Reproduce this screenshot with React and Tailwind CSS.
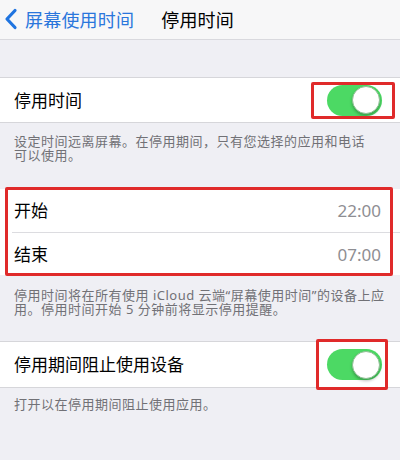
import React from "react";

function Toggle() {
  return (
    <div className="relative w-[55px] h-[31px] rounded-full bg-[#4cd964]">
      <div className="absolute right-[2px] top-[1.5px] w-[28px] h-[28px] rounded-full bg-white border border-[#8fbf94] shadow-[0_2px_3px_rgba(0,0,0,0.25)]" />
    </div>
  );
}

export default function App() {
  const font = { fontFamily: '"Noto Sans", "Noto Sans CJK SC", sans-serif' };
  return (
    <div className="w-[400px] h-[460px] bg-[#efeff4] overflow-hidden" style={font}>
      {/* nav bar */}
      <div className="h-[40px] bg-[#f7f7f8] border-b border-[#d9d9de] flex items-center">
        <svg width="14" height="22" viewBox="0 0 14 22" className="ml-[4px] mt-[-2px]">
          <path d="M11 2.5 L3 11 L11 19.5" fill="none" stroke="#1f74e0" strokeWidth="3.2" strokeLinecap="round" strokeLinejoin="round" />
        </svg>
        <span className="ml-[7px] text-[18px] leading-none text-[#2a76dc] tracking-[0.2px]">屏幕使用时间</span>
        <span className="ml-[27px] text-[18px] leading-none text-black tracking-[0.2px]">停用时间</span>
      </div>

      <div className="h-[37px]" />

      {/* row 1 */}
      <div className="relative h-[46px] bg-white border-t border-b border-[#d6d6da] flex items-center justify-between pl-[14px] pr-[18px]">
        <span className="text-[17px] text-black leading-none">停用时间</span>
        <Toggle />
        <div className="absolute left-[311px] top-[4px] w-[84px] h-[37px] border-[3px] border-[#e02a2a] rounded-[2px]" />
      </div>

      <div className="h-[66px] pt-[11px] px-[14px] text-[13px] tracking-[0.5px] leading-[14px] text-[#717176]">
        <p>设定时间远离屏幕。在停用期间，只有您选择的应用和电话</p>
        <p>可以使用。</p>
      </div>

      {/* section 2 */}
      <div className="relative bg-white">
        <div className="h-[43px] flex items-center justify-between pl-[14px] pr-[19px]">
          <span className="text-[17px] text-black leading-none">开始</span>
          <span className="text-[17px] text-[#8e8e93] leading-none">22:00</span>
        </div>
        <div className="ml-[12px] h-px bg-[#dcdce0]" />
        <div className="h-[42px] flex items-center justify-between pl-[14px] pr-[19px]">
          <span className="text-[17px] text-black leading-none">结束</span>
          <span className="text-[17px] text-[#8e8e93] leading-none">07:00</span>
        </div>
        <div className="absolute left-[5px] right-[7px] top-[-2px] bottom-[-1px] border-[3px] border-[#e02a2a] rounded-[2px]" />
      </div>

      <div className="h-[66px] pt-[13px] px-[14px] text-[13px] tracking-[0.5px] leading-[14px] text-[#717176]">
        <p>停用时间将在所有使用 iCloud 云端“屏幕使用时间”的设备上应</p>
        <p>用。停用时间开始 5 分钟前将显示停用提醒。</p>
      </div>

      {/* row 3 */}
      <div className="relative h-[47px] bg-white border-t border-b border-[#d6d6da] flex items-center justify-between pl-[14px] pr-[18px]">
        <span className="text-[17px] text-black leading-none">停用期间阻止使用设备</span>
        <Toggle />
        <div className="absolute left-[316px] top-[-3px] w-[72px] h-[51px] border-[3px] border-[#e02a2a] rounded-[2px]" />
      </div>

      <div className="pt-[9px] px-[14px] text-[13px] tracking-[0.5px] leading-[14px] text-[#717176]">
        <p>打开以在停用期间阻止使用应用。</p>
      </div>
    </div>
  );
}
